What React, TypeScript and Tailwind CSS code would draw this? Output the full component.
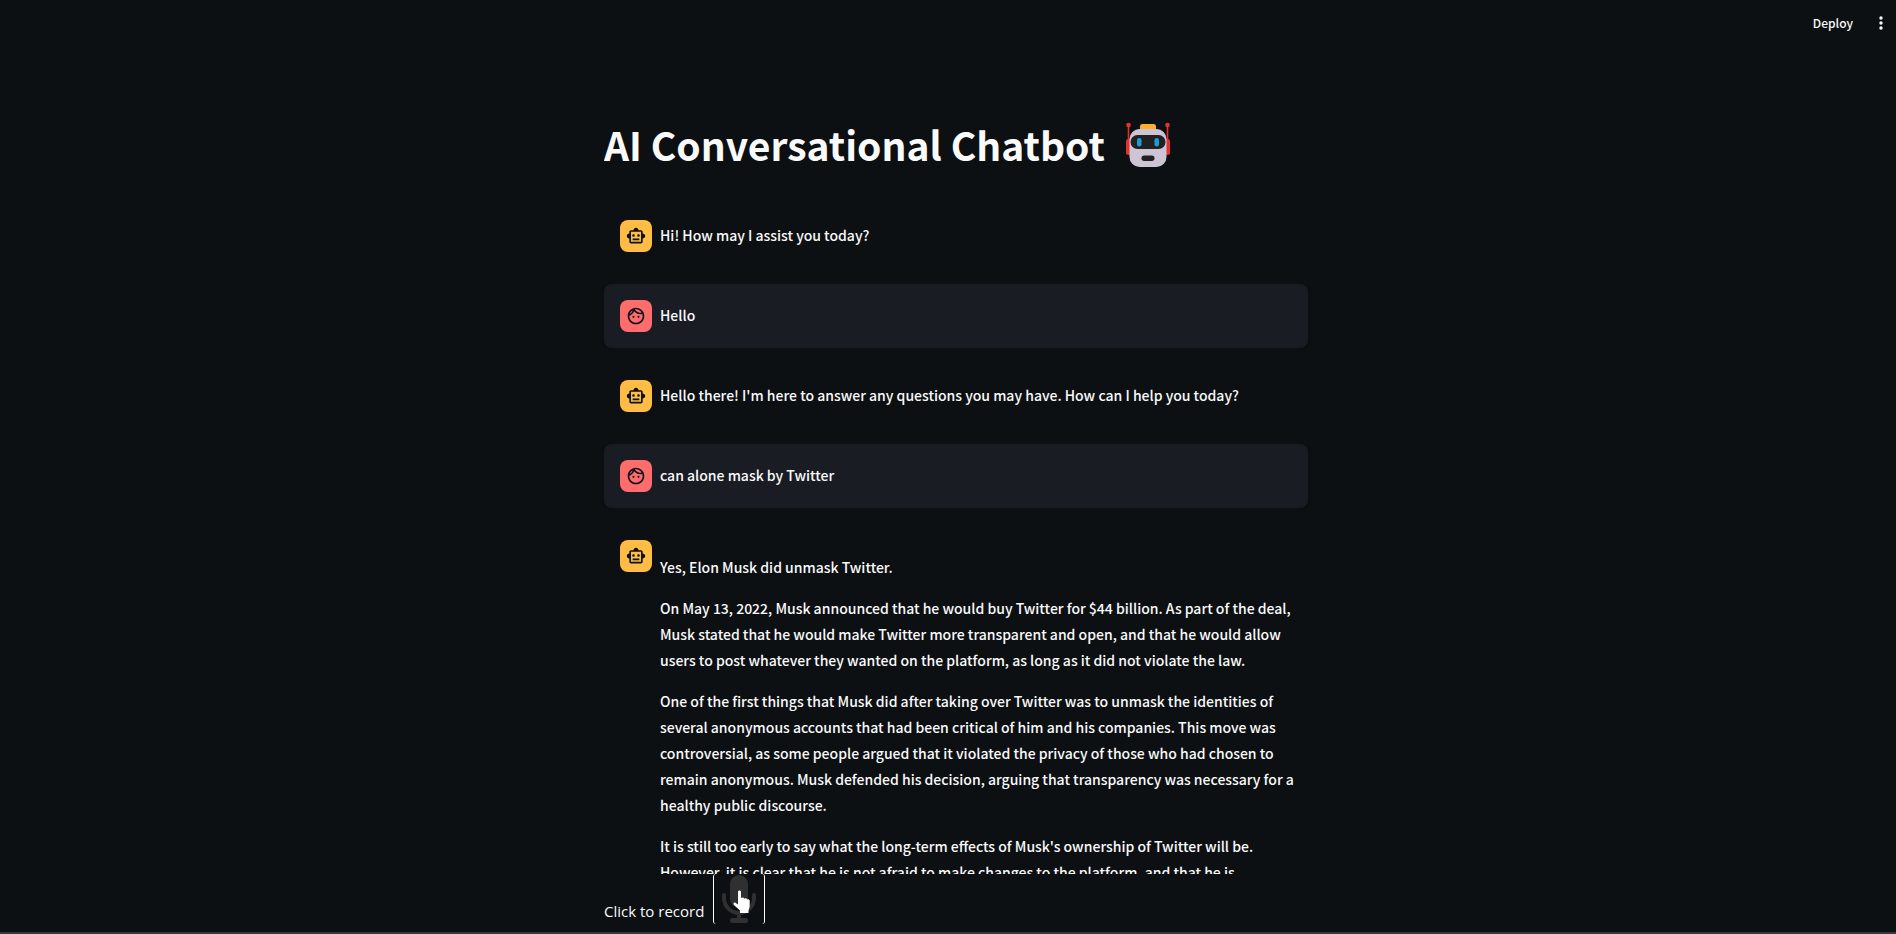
import React from "react";

function BotIcon() {
  return (
    <svg viewBox="0 0 24 24" className="size-5" fill="currentColor" aria-hidden="true">
      <path d="M20 9V7c0-1.100-.9-2-2-2h-3c0-1.660-1.340-3-3-3S9 3.340 9 5H6c-1.100 0-2 .9-2 2v2c-1.660 0-3 1.340-3 3s1.340 3 3 3v4c0 1.100.9 2 2 2h12c1.100 0 2-.9 2-2v-4c1.660 0 3-1.340 3-3s-1.340-3-3-3zm-2 10H6V7h12v12zm-9-6c-.830 0-1.500-.670-1.500-1.500S8.170 10 9 10s1.500.670 1.500 1.500S9.830 13 9 13zm7.500-1.500c0 .830-.670 1.500-1.500 1.500s-1.500-.670-1.500-1.500.670-1.500 1.500-1.500 1.500.670 1.500 1.500zM8 15h8v2H8v-2z" />
    </svg>
  );
}

function FaceIcon() {
  return (
    <svg viewBox="0 0 24 24" className="size-5" fill="currentColor" aria-hidden="true">
      <path d="M10.250 13a1.250 1.250 0 1 1-2.500 0 1.250 1.250 0 0 1 2.500 0zM15 11.750a1.250 1.250 0 1 0 0 2.500 1.250 1.250 0 0 0 0-2.500zM22 12c0 5.520-4.480 10-10 10S2 17.520 2 12 6.480 2 12 2s10 4.480 10 10zM10.660 4.120C12.060 6.440 14.600 8 17.500 8c.460 0 .910-.050 1.340-.120C17.440 5.560 14.900 4 12 4c-.460 0-.910.050-1.340.120zM4.420 9.470c1.710-.970 3.030-2.550 3.660-4.440C6.370 6 5.050 7.580 4.420 9.470zM20 12c0-.780-.120-1.530-.330-2.240-.7.150-1.420.240-2.170.240-3.130 0-5.920-1.440-7.760-3.690C8.690 8.870 6.600 10.880 4 11.860c.010.040 0 .090 0 .140 0 4.410 3.590 8 8 8s8-3.590 8-8z" />
    </svg>
  );
}

function RobotHead() {
  return (
    <svg viewBox="0 0 46 46" className="size-[46px] shrink-0" role="img" aria-label="Robot">
      <path d="M3.500 3v20M42.500 3v20" stroke="#e5322f" strokeWidth="1.600" />
      <circle cx="3.500" cy="3" r="2.300" fill="#e5322f" />
      <circle cx="42.500" cy="3" r="2.300" fill="#e5322f" />
      <rect x="1" y="17" width="6" height="16" rx="2.500" fill="#e5322f" />
      <rect x="39" y="17" width="6" height="16" rx="2.500" fill="#e5322f" />
      <rect x="15" y="2" width="16" height="8" rx="2.500" fill="#fdaf2d" />
      <rect x="4.500" y="7" width="37" height="38" rx="10" fill="#cdc4d6" />
      <rect x="5.500" y="13" width="35" height="14" rx="7" fill="#212121" />
      <rect x="12" y="16" width="4.500" height="8.500" rx="2.200" fill="#189fd8" />
      <rect x="29.500" y="16" width="4.500" height="8.500" rx="2.200" fill="#189fd8" />
      <rect x="16.500" y="33.500" width="13" height="5.500" rx="2.700" fill="#212121" />
    </svg>
  );
}

function Message({ from, children }: { from: "bot" | "user"; children: React.ReactNode }) {
  const user = from === "user";
  return (
    <article className={`flex gap-2 rounded-lg p-4 ${user ? "bg-[#1a1c23]" : ""}`}>
      <div
        className={`flex size-8 shrink-0 items-center justify-center rounded-lg text-[#0e1117] ${
          user ? "bg-[#ff6c6c]" : "bg-[#ffbd45]"
        }`}
      >
        {user ? <FaceIcon /> : <BotIcon />}
      </div>
      <div className="min-w-0 flex-1 pt-0.5">{children}</div>
    </article>
  );
}

export default function App() {
  return (
    <div className="flex h-screen flex-col overflow-hidden bg-[#0c1013] font-['Noto_Sans_CJK_JP','Noto_Sans',sans-serif] text-[14px] leading-[26px] font-medium text-[#fafafa]">
      <header className="flex h-12 shrink-0 items-center justify-end gap-5 pr-[7px] pb-0.5">
        <button type="button" className="text-[12px]">Deploy</button>
        <button type="button" aria-label="Main menu" className="flex w-4 justify-center">
          <svg viewBox="0 0 4 16" className="h-4 w-1" fill="currentColor" aria-hidden="true">
            <circle cx="2" cy="3" r="1.700" />
            <circle cx="2" cy="8" r="1.700" />
            <circle cx="2" cy="13" r="1.700" />
          </svg>
        </button>
      </header>
      <div className="flex min-h-0 flex-1 flex-col pl-4">
        <main className="mx-auto min-h-0 w-full max-w-[704px] flex-1 overflow-hidden pt-[70px]">
          <h1 className="flex items-center gap-5 whitespace-nowrap text-[39px] leading-[53px] font-bold">
            AI Conversational Chatbot
            <RobotHead />
          </h1>
          <section className="mt-[33px] flex flex-col gap-4" aria-label="Conversation">
            <Message from="bot"><p>Hi! How may I assist you today?</p></Message>
            <Message from="user"><p>Hello</p></Message>
            <Message from="bot">
              <p>Hello there! I'm here to answer any questions you may have. How can I help you today?</p>
            </Message>
            <Message from="user"><p>can alone mask by Twitter</p></Message>
            <Message from="bot">
              <div className="flex flex-col gap-[15px] pt-3 whitespace-nowrap">
                <p>Yes, Elon Musk did unmask Twitter.</p>
                <p>
                  On May 13, 2022, Musk announced that he would buy Twitter for $44 billion. As part of the deal,
                  <br />
                  Musk stated that he would make Twitter more transparent and open, and that he would allow
                  <br />
                  users to post whatever they wanted on the platform, as long as it did not violate the law.
                </p>
                <p>
                  One of the first things that Musk did after taking over Twitter was to unmask the identities of
                  <br />
                  several anonymous accounts that had been critical of him and his companies. This move was
                  <br />
                  controversial, as some people argued that it violated the privacy of those who had chosen to
                  <br />
                  remain anonymous. Musk defended his decision, arguing that transparency was necessary for a
                  <br />
                  healthy public discourse.
                </p>
                <p>
                  It is still too early to say what the long-term effects of Musk's ownership of Twitter will be.
                  <br />
                  However, it is clear that he is not afraid to make changes to the platform, and that he is
                </p>
              </div>
            </Message>
          </section>
        </main>
        <footer className="mx-auto flex h-[58px] w-full max-w-[704px] shrink-0 items-start gap-[9px]">
          <label htmlFor="record" className="pt-6 font-['Open_Sans','Noto_Sans',sans-serif] text-[15px] font-normal">
            Click to record
          </label>
          <button
            id="record"
            type="button"
            className="flex h-[50px] w-[52px] cursor-pointer justify-center rounded-[3px] border-x border-white"
          >
            <svg viewBox="0 0 50 50" className="h-[50px] w-[50px]" aria-hidden="true">
              <rect x="16" y="1" width="18" height="33" rx="9" fill="#303030" />
              <path d="M10 21v3a15 15 0 0 0 30 0v-3M25 39v8" fill="none" stroke="#303030" strokeWidth="4" strokeLinecap="round" />
              <rect x="16" y="44" width="18" height="5" rx="2" fill="#303030" />
              <path d="M24 18c0-2 3-2 3 0v6c1-1 3-.7 3 .7 1-1 3-.6 3 .8 1-.8 2.700-.2 2.700 1.300v5c0 2-.7 3-1.200 4.500V39h-8.500v-2.500L20 31c-1.500-2 .5-3 1.800-2L24 30.500z" fill="#fff" />
            </svg>
          </button>
        </footer>
      </div>
      <div className="h-0.5 shrink-0 bg-[#34373b]" />
    </div>
  );
}
